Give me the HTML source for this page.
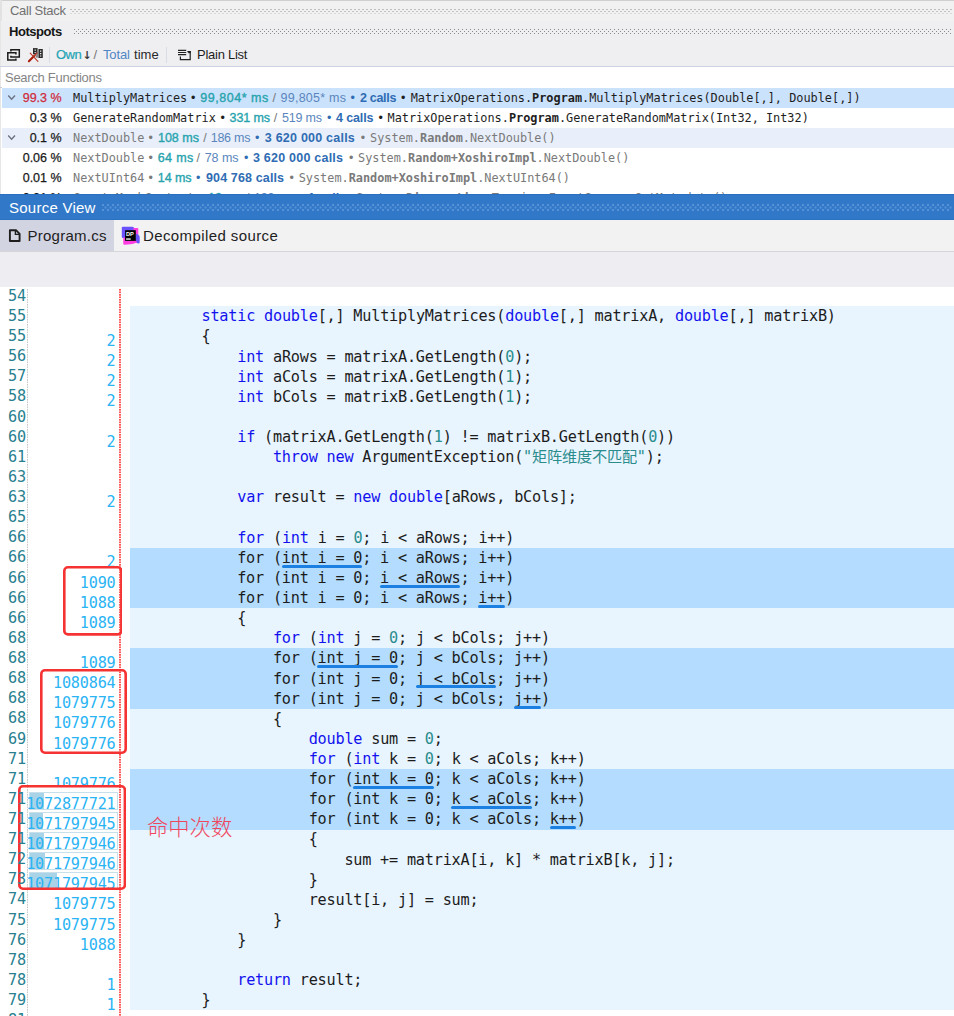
<!DOCTYPE html>
<html lang="zh"><head><meta charset="utf-8"><title>Source View</title>
<style>
html,body{margin:0;padding:0;}
body{width:954px;height:1016px;overflow:hidden;background:#fff;position:relative;
  font-family:"Liberation Sans","Noto Sans CJK SC",sans-serif;font-size:13px;color:#1e1e1e;}
.abs{position:absolute;}
.sg{position:absolute;top:0;white-space:pre;}
.mono{font-family:"DejaVu Sans Mono","Liberation Mono",monospace;}
/* ---------- top panel ---------- */
#toparea{position:absolute;left:0;top:0;width:954px;height:67px;background:#efeff1;}
#csbg{position:absolute;left:0;top:0;width:954px;height:21px;background:#f1f1f1;}
#srline{position:absolute;left:0;top:87px;width:954px;height:1px;background:#cbcbd2;}
.grip2{position:absolute;height:5px;background-image:linear-gradient(90deg,#bcbcbc 50%,transparent 50%),linear-gradient(90deg,transparent 50%,#c3c3c3 50%),linear-gradient(90deg,#d8d8d8 50%,transparent 50%);background-size:4px 1px,4px 1px,4px 1px;background-position:0 0,0 2px,0 4px;background-repeat:repeat-x;}
#topline{position:absolute;left:0;top:0;width:954px;height:1px;background:#cfcfcf;}
#leftline{position:absolute;left:0;top:0;width:2px;height:21px;background:#e2e2e2;}
#leftline2{position:absolute;left:0;top:21px;width:1px;height:173px;background:#e6e6e6;}
.bar{position:absolute;left:0;width:954px;}
.bar .sg{line-height:20px;}
.grip{position:absolute;height:6px;
  background-image:radial-gradient(circle at 0.5px 0.5px,var(--g) 0.55px,transparent 0.9px),radial-gradient(circle at 0.5px 0.5px,var(--g) 0.55px,transparent 0.9px);
  background-size:4px 4px,4px 4px;background-position:0 0,2px 2px;}
#tbline{position:absolute;left:0;top:66px;width:954px;height:1px;background:#cdd1e2;}
.vsep{position:absolute;width:1px;top:47px;height:16px;background:#d9dbe6;}
#search{position:absolute;left:2px;top:67px;width:952px;height:21px;background:#fff;}
.row{position:absolute;left:2px;width:952px;height:20px;}
.row .sg{line-height:20px;font-size:12.5px;top:0px;}
.row .mono{font-size:11.86px;top:0px;}
.pct{color:#1a1a1a;-webkit-text-stroke:0.25px #1a1a1a;}
.red{color:#d02c3c;-webkit-text-stroke:0.25px #d02c3c;}
.gray{color:#7a7a7a;}
.own{color:#27a3ae;-webkit-text-stroke:0.35px #27a3ae;}
.tot{color:#5a86bd;}
.sl{color:#777;}
.calls{color:#2f6cb3;font-weight:bold;}
.bl{color:#2f6cb3;}
.b{font-weight:bold;}
/* ---------- source view ---------- */
#svbar{position:absolute;left:0;top:194px;width:954px;height:26px;background:#3178c8;box-shadow:inset 0 1px 0 #2a6fc0,inset 0 -1px 0 #2c72c2;}
.grip3{position:absolute;height:7px;background-image:radial-gradient(circle at 1px 1px,#7eade4 0.4px,transparent 1px),radial-gradient(circle at 1px 1px,#7eade4 0.4px,transparent 1px);background-size:5px 5px,5px 5px;background-position:0 0,2.5px 2.5px;}
#tabs{position:absolute;left:0;top:220px;width:954px;height:31px;background:#f2f2f2;}
#tabact{position:absolute;left:0;top:0;width:114px;height:31px;background:#d3d4e2;}
#tabline{position:absolute;left:0;top:251px;width:954px;height:1px;background:#d6d6da;}
#subbar{position:absolute;left:0;top:252px;width:954px;height:35px;background:#eeeef2;}
/* ---------- code ---------- */
#codebg{position:absolute;left:130px;top:306px;width:824px;height:704px;background:#e8f4fe;}
.hl{position:absolute;left:130px;width:824px;background:#b3dcfe;}
.cl{position:absolute;left:130px;white-space:pre;font-family:"DejaVu Sans Mono","Noto Sans CJK SC","Liberation Mono",monospace;font-size:15.2px;letter-spacing:-0.211px;line-height:20.12px;height:20.12px;color:#1c1c1c;}
.k{color:#1212ee;}
.n{color:#2a8c8c;}
.s{color:#2a8c8c;}
.ul{position:absolute;height:3.2px;border-radius:1.6px;background:#1b80e2;}
.ln{position:absolute;left:8px;font-family:"DejaVu Sans Mono","Liberation Mono",monospace;font-size:15.2px;letter-spacing:-0.211px;line-height:20.12px;height:20.12px;color:#28808f;white-space:pre;}
.ct{position:absolute;right:838.5px;font-family:"DejaVu Sans Mono","Liberation Mono",monospace;font-size:15.2px;letter-spacing:-0.211px;line-height:20.12px;height:20.12px;color:#2bb4f4;white-space:pre;text-align:right;}
#gline{position:absolute;left:27px;top:288.5px;width:1.3px;height:728px;background-image:linear-gradient(#c9c9c9 52%,transparent 52%);background-size:1.3px 2.5px;}
#rline{position:absolute;left:119px;top:288.5px;width:2px;height:728px;background-image:linear-gradient(rgba(255,56,56,0.85) 55%,transparent 55%);background-size:2px 2.5px;}
.rbox{position:absolute;border:2.5px solid #f23030;border-radius:4px;background:#fff;box-sizing:border-box;}
.barbox{position:absolute;left:29px;width:88.5px;height:18px;box-sizing:border-box;border:1px solid #c6dfea;background:#fff;}
.barfill{position:absolute;left:0;top:0;height:16px;background:#a9d3e6;}
#hit{position:absolute;left:147px;top:811px;font-family:"Noto Sans CJK SC","Liberation Sans",sans-serif;font-weight:300;font-size:21.3px;line-height:30px;color:#f0465c;white-space:pre;}

</style></head>
<body>
<div id="toparea"></div><div id="csbg"></div><div id="topline"></div><div id="leftline"></div><div id="leftline2"></div>
<div class="bar" style="top:0;height:21px"><span id="s1" class="sg " style="color:#707070;top:1px;left:10.0px;letter-spacing:-0.283px;">Call Stack</span><div class="grip2" style="left:70px;top:9px;width:882px"></div></div>
<div class="bar" style="top:21px;height:22px"><span id="s2" class="sg b" style="color:#151515;top:1px;left:9.0px;letter-spacing:-0.455px;">Hotspots</span><div class="grip" style="--g:#8c8c8c;left:74px;top:8px;width:878px"></div></div>
<div class="bar" style="top:43px;height:23px"><svg class="abs" style="left:6px;top:4px" width="16" height="16" viewBox="0 0 16 16" fill="none" stroke="#1c1c1c" stroke-width="1.5"><path d="M4.9 4.4V2.8H13.3V10.1H4.9V8.7"/><path d="M9.9 7.4V5.8H1.8V13.1H9.9V11.5"/></svg><svg class="abs" style="left:27px;top:3px" width="18" height="18" viewBox="0 0 18 18" fill="none"><path d="M6 2.1H10.6V8.2H6Z" fill="#2a2a2a"/><path d="M11.4 3H15.8V12H11.4Z" fill="#2a2a2a"/><path d="M10.4 3.2L11.6 3.2L11.6 11.5L8.6 11.8Z" fill="#8a8a8a"/><path d="M7.6 3.6h1.2v1.1h-1.2zM7.6 5.9h1.2v1.1h-1.2zM13 4.6h1.3v1.2h-1.3zM13 7h1.3v1.2h-1.3zM13 9.4h1.3v1.2h-1.3z" fill="#f2f2f2"/><path d="M1.9 15.2L7.6 9.5" stroke="#a81c0a" stroke-width="2.1" stroke-linecap="round"/><path d="M7.6 9.5L10.2 6.9" stroke="#b83a2a" stroke-width="1.1" stroke-linecap="round"/><path d="M3.2 7.2L10.9 15.3" stroke="#b83a2a" stroke-width="1.1" stroke-linecap="round"/></svg><div class="vsep" style="left:49px;top:4px"></div><span id="s3" class="sg b" style="color:#2aa3b0;font-weight:normal;-webkit-text-stroke:0.2px #22a4b4;color:#22a4b4;top:2px;left:56.0px;letter-spacing:-0.511px;">Own</span><span id="s4" class="sg " style="color:#3a3a3a;top:3px;font-size:11px;font-weight:bold;font-family:DejaVu Sans,sans-serif;left:82.6px;">↓</span><span id="s5" class="sg " style="color:#777;top:2px;left:93.5px;">/</span><span id="s6" class="sg " style="color:#4f86c6;top:2px;left:103.0px;letter-spacing:-0.154px;">Total</span><span id="s7" class="sg " style="color:#2a2a2a;top:2px;left:134.0px;letter-spacing:0.034px;">time</span><div class="vsep" style="left:166px;top:4px"></div><svg class="abs" style="left:177px;top:6px" width="15" height="12" viewBox="0 0 15 12" fill="none" stroke="#222" stroke-width="1.2"><path d="M1 1.3H9.2M1 3.5H9.2M1 5.7H9.2"/><path d="M3.4 7.4V10.6H13.2V2.6H10.4"/><rect x="11.2" y="2" width="2.6" height="2.2" fill="#222" stroke="none"/></svg><span id="s8" class="sg " style="color:#1e1e1e;top:2px;left:197.0px;letter-spacing:-0.255px;">Plain List</span></div>
<div id="tbline"></div>
<div id="srline"></div><div id="search"><span id="s9" class="sg " style="color:#858585;line-height:20px;top:1px;left:3.0px;letter-spacing:-0.279px;">Search Functions</span></div>
<div class="row" style="top:88px;background:#cbe2fc;"><svg class="abs" style="left:5px;top:6px" width="10" height="8" viewBox="0 0 10 8" fill="none" stroke="#6b7280" stroke-width="1.4"><path d="M1.2 1.6L4.6 5.2L8 1.6"/></svg><span id="s10" class="sg red" style="right:892.4px;">99.3 %</span><span id="s11" class="sg mono" style="left:71.0px;">MultiplyMatrices</span><span id="s12" class="sg " style="left:189.0px;">•</span><span id="s13" class="sg own" style="left:198.3px;letter-spacing:0.527px;">99,804* ms</span><span id="s14" class="sg sl" style="left:270.6px;">/</span><span id="s15" class="sg tot" style="left:278.6px;letter-spacing:0.237px;">99,805* ms</span><span id="s16" class="sg bl" style="left:348.5px;">•</span><span id="s17" class="sg calls" style="left:357.9px;letter-spacing:-0.291px;">2 calls</span><span id="s18" class="sg " style="left:398.9px;">•</span><span id="s19" class="sg mono" style="left:408.7px;">MatrixOperations.</span><span id="s20" class="sg mono b" style="left:530.1px;">Program</span><span id="s21" class="sg mono" style="left:580.1px;">.MultiplyMatrices(Double[,], Double[,])</span></div>
<div class="row" style="top:108px;"><span id="s22" class="sg pct" style="right:892.4px;">0.3 %</span><span id="s23" class="sg mono" style="left:71.0px;">GenerateRandomMatrix</span><span id="s24" class="sg " style="left:218.6px;">•</span><span id="s25" class="sg own" style="left:227.6px;letter-spacing:-0.100px;">331 ms</span><span id="s26" class="sg sl" style="left:271.8px;">/</span><span id="s27" class="sg tot" style="left:279.9px;letter-spacing:-0.183px;">519 ms</span><span id="s28" class="sg bl" style="left:324.9px;">•</span><span id="s29" class="sg calls" style="left:334.0px;letter-spacing:-0.119px;">4 calls</span><span id="s30" class="sg " style="left:376.4px;">•</span><span id="s31" class="sg mono" style="left:385.5px;">MatrixOperations.</span><span id="s32" class="sg mono b" style="left:506.9px;">Program</span><span id="s33" class="sg mono" style="left:556.9px;">.GenerateRandomMatrix(Int32, Int32)</span></div>
<div class="row" style="top:128px;background:#e8effa;"><svg class="abs" style="left:5px;top:6px" width="10" height="8" viewBox="0 0 10 8" fill="none" stroke="#6b7280" stroke-width="1.4"><path d="M1.2 1.6L4.6 5.2L8 1.6"/></svg><span id="s34" class="sg pct" style="right:892.4px;">0.1 %</span><span id="s35" class="sg mono gray" style="left:71.0px;">NextDouble</span><span id="s36" class="sg gray" style="left:146.5px;">•</span><span id="s37" class="sg own" style="left:156.0px;letter-spacing:-0.017px;">108 ms</span><span id="s38" class="sg sl" style="left:201.2px;">/</span><span id="s39" class="sg tot" style="left:208.7px;letter-spacing:-0.250px;">186 ms</span><span id="s40" class="sg bl" style="left:253.1px;">•</span><span id="s41" class="sg calls" style="left:262.8px;letter-spacing:0.221px;">3 620 000 calls</span><span id="s42" class="sg gray" style="left:358.8px;">•</span><span id="s43" class="sg mono gray" style="left:368.0px;">System.</span><span id="s44" class="sg mono b gray" style="left:418.0px;">Random</span><span id="s45" class="sg mono gray" style="left:460.8px;">.NextDouble()</span></div>
<div class="row" style="top:148px;"><span id="s46" class="sg pct" style="right:892.4px;">0.06 %</span><span id="s47" class="sg mono gray" style="left:71.0px;">NextDouble</span><span id="s48" class="sg gray" style="left:146.5px;">•</span><span id="s49" class="sg own" style="left:155.8px;letter-spacing:0.351px;">64 ms</span><span id="s50" class="sg sl" style="left:194.6px;">/</span><span id="s51" class="sg tot" style="left:202.7px;letter-spacing:-0.029px;">78 ms</span><span id="s52" class="sg bl" style="left:241.9px;">•</span><span id="s53" class="sg calls" style="left:251.0px;letter-spacing:0.221px;">3 620 000 calls</span><span id="s54" class="sg gray" style="left:346.9px;">•</span><span id="s55" class="sg mono gray" style="left:356.0px;">System.</span><span id="s56" class="sg mono b gray" style="left:406.0px;">Random+XoshiroImpl</span><span id="s57" class="sg mono gray" style="left:534.5px;">.NextDouble()</span></div>
<div class="row" style="top:168px;"><span id="s58" class="sg pct" style="right:892.4px;">0.01 %</span><span id="s59" class="sg mono gray" style="left:71.0px;">NextUInt64</span><span id="s60" class="sg gray" style="left:146.5px;">•</span><span id="s61" class="sg own" style="left:155.8px;letter-spacing:-0.069px;">14 ms</span><span id="s62" class="sg bl" style="left:193.9px;">•</span><span id="s63" class="sg calls" style="left:204.0px;letter-spacing:0.133px;">904 768 calls</span><span id="s64" class="sg gray" style="left:287.4px;">•</span><span id="s65" class="sg mono gray" style="left:296.7px;">System.</span><span id="s66" class="sg mono b gray" style="left:346.7px;">Random+XoshiroImpl</span><span id="s67" class="sg mono gray" style="left:475.2px;">.NextUInt64()</span></div>
<div class="row" style="top:188px;"><span id="s68" class="sg pct" style="right:892.4px;">0.01 %</span><span id="s69" class="sg mono gray" style="left:71.0px;">CreateMockContext</span><span id="s70" class="sg gray" style="left:196.7px;">•</span><span id="s71" class="sg own" style="left:206.0px;letter-spacing:-0.069px;">12 ms</span><span id="s72" class="sg sl" style="left:244.0px;">/</span><span id="s73" class="sg tot" style="left:252.0px;letter-spacing:-0.250px;">190 ms</span><span id="s74" class="sg bl" style="left:296.7px;">•</span><span id="s75" class="sg calls" style="left:306.0px;">1 call</span><span id="s76" class="sg gray" style="left:344.7px;">•</span><span id="s77" class="sg mono gray" style="left:354.0px;">System.</span><span id="s78" class="sg mono b gray" style="left:404.0px;">Diagnostics</span><span id="s79" class="sg mono gray" style="left:482.5px;">.Tracing.EventSource.GetMetadata()</span></div>
<div id="svbar"><span id="s80" class="sg " style="color:#fff;font-size:15px;line-height:26px;top:1px;left:9.0px;letter-spacing:0.251px;">Source View</span><div class="grip3" style="left:102px;top:10px;width:850px"></div></div>
<div id="tabs"><div id="tabact"></div><svg class="abs" style="left:8px;top:8px" width="14" height="15" viewBox="0 0 14 15" fill="none" stroke="#1e1e1e" stroke-width="1.9"><path d="M1.9 2.2H8L11.6 5.8V13H1.9Z" stroke-linejoin="round"/><path d="M7.4 2.4V6.4H11.4" stroke-width="1.4"/></svg><span id="s81" class="sg " style="font-size:15px;line-height:31px;color:#1e1e1e;top:0px;left:27.5px;letter-spacing:0.251px;">Program.cs</span><svg class="abs" style="left:120px;top:5px" width="22" height="22" viewBox="0 0 22 22"><path d="M2.6 1.7H12.4Q13.2 1.7 13.8 2.4L15 4V9H8V12.9H2.6Q1.8 12.9 1.8 12.1V2.5Q1.8 1.7 2.6 1.7Z" fill="#6b52ff"/><path d="M12.4 3.9L14.4 2.9L17.3 2.9Q18.3 3 18.3 4V9.6H15V5.4Z" fill="#ff3de0"/><path d="M15.6 9.2L17.4 8.7Q19.7 10.6 19.7 12V17.4Q19.6 18.4 18.5 18.5L16.6 18.1L15 15.6Z" fill="#6b52ff"/><path d="M3.3 12.4H6V15.4H15.8L17.2 17.6Q12 19.4 8 19.6L4.2 19.8Q3.3 19.7 3.3 18.8Z" fill="#ff3de0"/><rect x="5.1" y="5.2" width="10.7" height="10.7" fill="#000"/><text x="6" y="10.6" font-family="Liberation Sans,sans-serif" font-weight="bold" font-size="5.6" fill="#fff">DP</text><rect x="6.1" y="13.4" width="4.6" height="1.3" fill="#fff"/></svg><span id="s82" class="sg " style="font-size:15px;line-height:31px;color:#1e1e1e;top:0px;left:143.0px;letter-spacing:0.400px;">Decompiled source</span></div><div id="tabline"></div><div id="subbar"></div>
<div id="codebg"></div>
<div class="hl" style="top:548px;height:60px"></div>
<div class="hl" style="top:648px;height:61px"></div>
<div class="hl" style="top:769px;height:61px"></div>
<div class="cl" style="top:306.35px">        <span class="k">static</span> <span class="k">double</span>[,] MultiplyMatrices(<span class="k">double</span>[,] matrixA, <span class="k">double</span>[,] matrixB)</div>
<div class="cl" style="top:326.47px">        {</div>
<div class="cl" style="top:346.59px">            <span class="k">int</span> aRows = matrixA.GetLength(<span class="n">0</span>);</div>
<div class="cl" style="top:366.71px">            <span class="k">int</span> aCols = matrixA.GetLength(<span class="n">1</span>);</div>
<div class="cl" style="top:386.83px">            <span class="k">int</span> bCols = matrixB.GetLength(<span class="n">1</span>);</div>
<div class="cl" style="top:427.07px">            <span class="k">if</span> (matrixA.GetLength(<span class="n">1</span>) != matrixB.GetLength(<span class="n">0</span>))</div>
<div class="cl" style="top:447.19px">                <span class="k">throw</span> <span class="k">new</span> ArgumentException(<span class="s">&quot;矩阵维度不匹配&quot;</span>);</div>
<div class="cl" style="top:487.43px">            <span class="k">var</span> result = <span class="k">new</span> <span class="k">double</span>[aRows, bCols];</div>
<div class="cl" style="top:527.67px">            <span class="k">for</span> (<span class="k">int</span> i = <span class="n">0</span>; i &lt; aRows; i++)</div>
<div class="cl" style="top:547.79px">            for (int i = 0; i &lt; aRows; i++)</div><div class="ul" style="left:281.5px;top:565.0px;width:80.5px"></div>
<div class="cl" style="top:567.91px">            for (int i = 0; i &lt; aRows; i++)</div><div class="ul" style="left:379.8px;top:585.0px;width:80.5px"></div>
<div class="cl" style="top:588.03px">            for (int i = 0; i &lt; aRows; i++)</div><div class="ul" style="left:478.2px;top:605.0px;width:26.8px"></div>
<div class="cl" style="top:608.15px">            {</div>
<div class="cl" style="top:628.27px">                <span class="k">for</span> (<span class="k">int</span> j = <span class="n">0</span>; j &lt; bCols; j++)</div>
<div class="cl" style="top:648.39px">                for (int j = 0; j &lt; bCols; j++)</div><div class="ul" style="left:317.2px;top:665.0px;width:80.5px"></div>
<div class="cl" style="top:668.51px">                for (int j = 0; j &lt; bCols; j++)</div><div class="ul" style="left:415.6px;top:685.0px;width:80.5px"></div>
<div class="cl" style="top:688.63px">                for (int j = 0; j &lt; bCols; j++)</div><div class="ul" style="left:513.9px;top:706.0px;width:26.8px"></div>
<div class="cl" style="top:708.75px">                {</div>
<div class="cl" style="top:728.87px">                    <span class="k">double</span> sum = <span class="n">0</span>;</div>
<div class="cl" style="top:748.99px">                    <span class="k">for</span> (<span class="k">int</span> k = <span class="n">0</span>; k &lt; aCols; k++)</div>
<div class="cl" style="top:769.11px">                    for (int k = 0; k &lt; aCols; k++)</div><div class="ul" style="left:353.0px;top:786.0px;width:80.5px"></div>
<div class="cl" style="top:789.23px">                    for (int k = 0; k &lt; aCols; k++)</div><div class="ul" style="left:451.3px;top:806.0px;width:80.5px"></div>
<div class="cl" style="top:809.35px">                    for (int k = 0; k &lt; aCols; k++)</div><div class="ul" style="left:549.7px;top:826.0px;width:26.8px"></div>
<div class="cl" style="top:829.47px">                    {</div>
<div class="cl" style="top:849.59px">                        sum += matrixA[i, k] * matrixB[k, j];</div>
<div class="cl" style="top:869.71px">                    }</div>
<div class="cl" style="top:889.83px">                    result[i, j] = sum;</div>
<div class="cl" style="top:909.95px">                }</div>
<div class="cl" style="top:930.07px">            }</div>
<div class="cl" style="top:970.31px">            <span class="k">return</span> result;</div>
<div class="cl" style="top:990.43px">        }</div>
<div class="ct" style="top:331.12px">2</div><div class="ct" style="top:351.24px">2</div><div class="ct" style="top:371.36px">2</div><div class="ct" style="top:391.48px">2</div><div class="ct" style="top:431.72px">2</div><div class="ct" style="top:492.08px">2</div><div class="ct" style="top:552.44px">2</div><div class="ct" style="top:653.04px">1089</div><div class="ct" style="top:773.76px">1079776</div><div class="ct" style="top:894.48px">1079775</div><div class="ct" style="top:914.60px">1079775</div><div class="ct" style="top:934.72px">1088</div><div class="ct" style="top:974.96px">1</div><div class="ct" style="top:995.08px">1</div>
<svg class="abs" style="left:62.6px;top:566.1px" width="59.7" height="69.7"><rect x="1.30" y="1.30" width="57.10" height="67.10" rx="3.6" ry="3.6" fill="#fff" stroke="none" stroke-width="2.6"/></svg><svg class="abs" style="left:40.1px;top:668.8px" width="87.0" height="85.0"><rect x="1.30" y="1.30" width="84.40" height="82.40" rx="3.6" ry="3.6" fill="#fff" stroke="none" stroke-width="2.6"/></svg><svg class="abs" style="left:17.8px;top:785.2px" width="108.2" height="105.0"><rect x="1.30" y="1.30" width="105.60" height="102.40" rx="3.6" ry="3.6" fill="#fff" stroke="none" stroke-width="2.6"/></svg>
<div id="gline"></div><div id="rline"></div>
<div class="barbox" style="top:791.7px"><div class="barfill" style="width:13.5px"></div></div><div class="barbox" style="top:811.8px"><div class="barfill" style="width:12.5px"></div></div><div class="barbox" style="top:831.9px"><div class="barfill" style="width:13.5px"></div></div><div class="barbox" style="top:852.0px"><div class="barfill" style="width:14.5px"></div></div><div class="barbox" style="top:872.2px"><div class="barfill" style="width:27.0px"></div></div>
<div class="ct" style="top:572.56px">1090</div><div class="ct" style="top:592.68px">1088</div><div class="ct" style="top:612.80px">1089</div><div class="ct" style="top:673.16px">1080864</div><div class="ct" style="top:693.28px">1079775</div><div class="ct" style="top:713.40px">1079776</div><div class="ct" style="top:733.52px">1079776</div><div class="ct" style="top:793.88px">1072877721</div><div class="ct" style="top:814.00px">1071797945</div><div class="ct" style="top:834.12px">1071797946</div><div class="ct" style="top:854.24px">1071797946</div><div class="ct" style="top:874.36px">1071797945</div>
<svg class="abs" style="left:62.6px;top:566.1px" width="59.7" height="69.7"><rect x="1.30" y="1.30" width="57.10" height="67.10" rx="3.6" ry="3.6" fill="none" stroke="#f53333" stroke-width="2.6"/></svg><svg class="abs" style="left:40.1px;top:668.8px" width="87.0" height="85.0"><rect x="1.30" y="1.30" width="84.40" height="82.40" rx="3.6" ry="3.6" fill="none" stroke="#f53333" stroke-width="2.6"/></svg><svg class="abs" style="left:17.8px;top:785.2px" width="108.2" height="105.0"><rect x="1.30" y="1.30" width="105.60" height="102.40" rx="3.6" ry="3.6" fill="none" stroke="#f53333" stroke-width="2.6"/></svg>
<div id="hit">命中次数</div>
<div class="ln" style="top:285.88px">54</div><div class="ln" style="top:306.00px">55</div><div class="ln" style="top:326.12px">55</div><div class="ln" style="top:346.24px">56</div><div class="ln" style="top:366.36px">57</div><div class="ln" style="top:386.48px">58</div><div class="ln" style="top:406.60px">60</div><div class="ln" style="top:426.72px">60</div><div class="ln" style="top:446.84px">61</div><div class="ln" style="top:466.96px">63</div><div class="ln" style="top:487.08px">63</div><div class="ln" style="top:507.20px">65</div><div class="ln" style="top:527.32px">66</div><div class="ln" style="top:547.44px">66</div><div class="ln" style="top:567.56px">66</div><div class="ln" style="top:587.68px">66</div><div class="ln" style="top:607.80px">66</div><div class="ln" style="top:627.92px">68</div><div class="ln" style="top:648.04px">68</div><div class="ln" style="top:668.16px">68</div><div class="ln" style="top:688.28px">68</div><div class="ln" style="top:708.40px">68</div><div class="ln" style="top:728.52px">69</div><div class="ln" style="top:748.64px">71</div><div class="ln" style="top:768.76px">71</div><div class="ln" style="top:788.88px">71</div><div class="ln" style="top:809.00px">71</div><div class="ln" style="top:829.12px">71</div><div class="ln" style="top:849.24px">72</div><div class="ln" style="top:869.36px">73</div><div class="ln" style="top:889.48px">74</div><div class="ln" style="top:909.60px">75</div><div class="ln" style="top:929.72px">76</div><div class="ln" style="top:949.84px">78</div><div class="ln" style="top:969.96px">78</div><div class="ln" style="top:990.08px">79</div><div class="ln" style="top:1010.20px">81</div>
</body></html>
